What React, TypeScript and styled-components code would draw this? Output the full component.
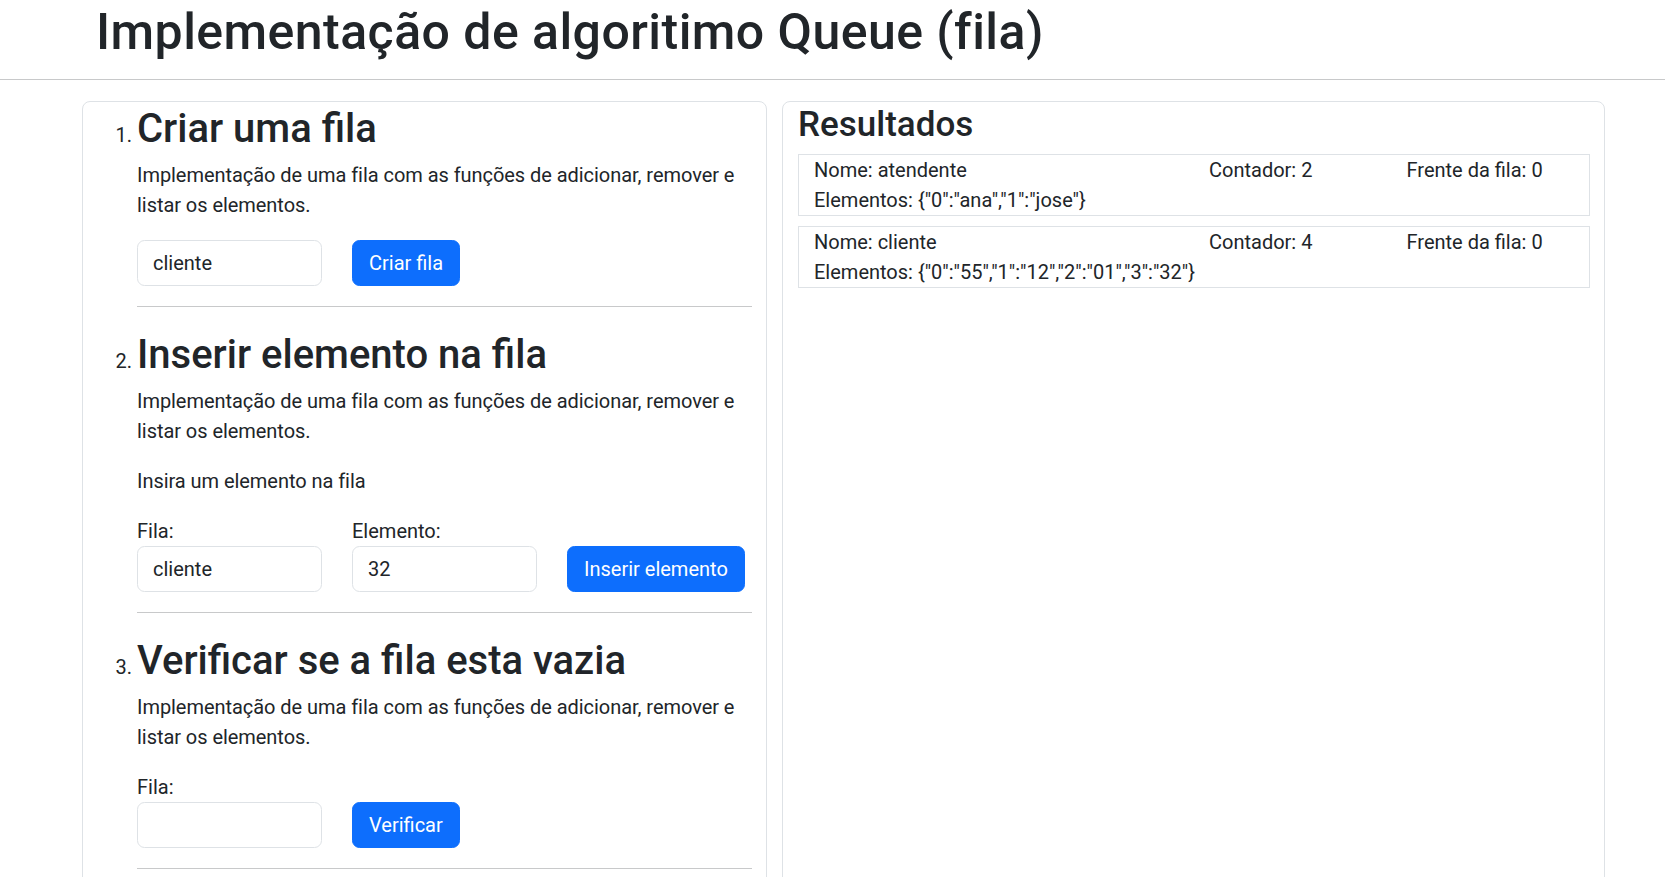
import React from 'react';
import styled, { createGlobalStyle } from 'styled-components';

const GlobalStyle = createGlobalStyle`
  * { box-sizing: border-box; }
  body {
    margin: 0;
    background: #fff;
    color: #212529;
    font-family: Roboto, 'Liberation Sans', sans-serif;
    font-size: 20px;
    line-height: 30px;
  }
`;

const Header = styled.header`
  height: 80px;
  padding: 2px 0 0 96px;
  border-bottom: 1px solid #c8c9ca;
`;

const Title = styled.h1`
  margin: 0;
  font-size: 50px;
  line-height: 60px;
  font-weight: 500;
  letter-spacing: 0.45px;
`;

const Main = styled.main`
  display: flex;
  align-items: stretch;
  gap: 15px;
  padding: 21px 0 0 82px;
`;

const Card = styled.section<{ $width: number }>`
  width: ${({ $width }) => $width}px;
  flex: none;
  border: 1px solid #dee2e6;
  border-radius: 8px;
  background: #fff;
`;

const Steps = styled.ol`
  margin: 0;
  padding: 3px 14px 40px 54px;

  li::marker {
    font-size: 20px;
  }
`;

const Step = styled.li``;

const StepTitle = styled.h2`
  margin: 0 0 7px;
  font-size: 40px;
  line-height: 48px;
  font-weight: 500;
`;

const Text = styled.p`
  margin: 0 0 20px;
  letter-spacing: -0.05px;
`;

const FormRow = styled.div`
  display: grid;
  grid-template-columns: repeat(3, 185px);
  column-gap: 30px;
  align-items: end;
`;

const Field = styled.label`
  display: flex;
  flex-direction: column;
`;

const Input = styled.input`
  width: 185px;
  height: 46px;
  padding: 0 15px;
  border: 1px solid #dee2e6;
  border-radius: 7.5px;
  font: inherit;
  color: #212529;
  background: #fff;
`;

const Button = styled.button`
  justify-self: start;
  height: 46px;
  padding: 0 16px;
  border: 1px solid #0d6efd;
  border-radius: 7.5px;
  background: #0d6efd;
  color: #fff;
  font: inherit;
  white-space: nowrap;
`;

const Rule = styled.hr`
  margin: 20px 0 24px;
  border: 0;
  border-top: 1px solid #c8c9ca;
`;

const Results = styled.div`
  padding: 2px 14px 0 15px;
`;

const ResultsTitle = styled.h3`
  margin: 0 0 8px;
  font-size: 35px;
  line-height: 42px;
  font-weight: 500;
`;

const QueueBox = styled.div`
  display: grid;
  grid-template-columns: 2fr 1fr 1fr;
  border: 1px solid #dee2e6;
  margin-bottom: 10px;
`;

const Cell = styled.div<{ $wide?: boolean }>`
  padding: 0 15px;
  white-space: nowrap;
  grid-column: ${({ $wide }) => ($wide ? '1 / -1' : 'auto')};
`;

const description =
  'Implementação de uma fila com as funções de adicionar, remover e listar os elementos.';

const queues = [
  { nome: 'atendente', contador: 2, frente: 0, elementos: { 0: 'ana', 1: 'jose' } },
  { nome: 'cliente', contador: 4, frente: 0, elementos: { 0: '55', 1: '12', 2: '01', 3: '32' } },
];

export default function App() {
  return (
    <>
      <GlobalStyle />
      <Header>
        <Title>Implementação de algoritimo Queue (fila)</Title>
      </Header>
      <Main>
        <Card $width={685}>
          <Steps>
            <Step>
              <StepTitle>Criar uma fila</StepTitle>
              <Text>{description}</Text>
              <FormRow>
                <Input defaultValue="cliente" />
                <Button>Criar fila</Button>
              </FormRow>
              <Rule />
            </Step>
            <Step>
              <StepTitle>Inserir elemento na fila</StepTitle>
              <Text>{description}</Text>
              <Text>Insira um elemento na fila</Text>
              <FormRow>
                <Field>
                  Fila:
                  <Input defaultValue="cliente" />
                </Field>
                <Field>
                  Elemento:
                  <Input defaultValue="32" />
                </Field>
                <Button>Inserir elemento</Button>
              </FormRow>
              <Rule />
            </Step>
            <Step>
              <StepTitle>Verificar se a fila esta vazia</StepTitle>
              <Text>{description}</Text>
              <FormRow>
                <Field>
                  Fila:
                  <Input />
                </Field>
                <Button>Verificar</Button>
              </FormRow>
              <Rule />
            </Step>
          </Steps>
        </Card>
        <Card $width={823}>
          <Results>
            <ResultsTitle>Resultados</ResultsTitle>
            {queues.map((q) => (
              <QueueBox key={q.nome}>
                <Cell>Nome: {q.nome}</Cell>
                <Cell>Contador: {q.contador}</Cell>
                <Cell>Frente da fila: {q.frente}</Cell>
                <Cell $wide>Elementos: {JSON.stringify(q.elementos)}</Cell>
              </QueueBox>
            ))}
          </Results>
        </Card>
      </Main>
    </>
  );
}
